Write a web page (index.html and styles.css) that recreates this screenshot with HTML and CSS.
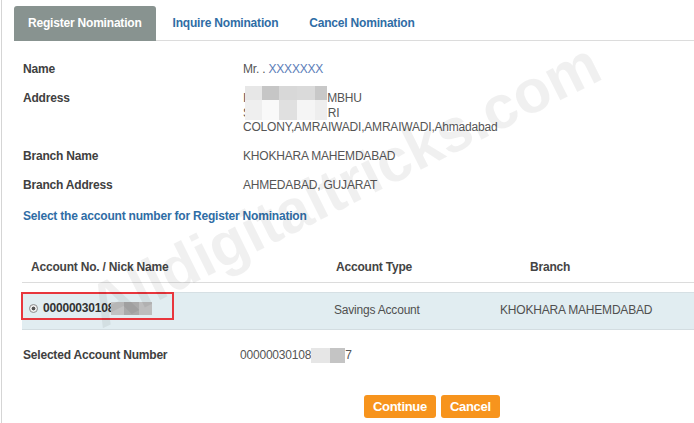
FILE: index.html
```html
<!DOCTYPE html>
<html lang="en">
<head>
<meta charset="utf-8">
<title>Register Nomination</title>
<link rel="stylesheet" href="styles.css">
</head>
<body>
<div class="page">
  <nav class="tabs">
    <a class="tab active" href="#">Register Nomination</a>
    <a class="tab" href="#">Inquire Nomination</a>
    <a class="tab" href="#">Cancel Nomination</a>
  </nav>

  <dl class="details">
    <dt>Name</dt>
    <dd>Mr. . <span class="masked-name">XXXXXXX</span></dd>
    <dt>Address</dt>
    <dd class="addr">
      <div>I<span class="gap gap1"></span>MBHU</div>
      <div>S<span class="gap gap2"></span>RI</div>
      <div>COLONY,AMRAIWADI,AMRAIWADI,Ahmadabad</div>
      <div class="mask"><i></i><i></i><i></i><i></i><i></i><i></i><i></i><i></i><i></i><i></i></div>
    </dd>
    <dt>Branch Name</dt>
    <dd>KHOKHARA MAHEMDABAD</dd>
    <dt>Branch Address</dt>
    <dd>AHMEDABAD, GUJARAT</dd>
  </dl>

  <h2 class="section-title">Select the account number for Register Nomination</h2>

  <div class="accounts">
    <div class="acc-head">
      <div class="h1">Account No. / Nick Name</div>
      <div class="h2">Account Type</div>
      <div class="h3">Branch</div>
    </div>
    <div class="acc-row">
      <div class="c1"><span class="radio"></span><span class="accno">00000030108</span><span class="blur row-blur"><i></i><i></i><i></i></span></div>
      <div class="c2">Savings Account</div>
      <div class="c3">KHOKHARA MAHEMDABAD</div>
      <div class="highlight"></div>
    </div>
  </div>

  <div class="selected">
    <div class="sel-label">Selected Account Number</div>
    <div class="sel-value">00000030108<span class="blur sel-blur"><i></i><i></i></span>7</div>
  </div>

  <div class="actions">
    <button class="btn" type="button">Continue</button>
    <button class="btn" type="button">Cancel</button>
  </div>

  <div class="watermark"><span>Alldigitaltricks.com</span></div>
</div>
</body>
</html>
```

FILE: styles.css
```css
html, body {
  margin: 0;
  padding: 0;
  background: #ffffff;
}

body {
  font-family: "Liberation Sans", Arial, sans-serif;
  font-size: 12px;
  letter-spacing: -0.2px;
  color: #555555;
}

.page {
  position: relative;
  margin-left: 1px;
  border-left: 1px solid #d5d5d5;
  padding: 6px 0 0 12px;
  height: 423px;
  box-sizing: border-box;
  overflow: hidden;
}

/* Tabs */
.tabs {
  display: flex;
  gap: 3px;
  height: 34px;
  border-bottom: 1px solid #dcdcdc;
}

.tab {
  display: block;
  padding: 0 14px;
  line-height: 34px;
  height: 35px;
  margin-bottom: -1px;
  font-weight: bold;
  color: #2f6da5;
  text-decoration: none;
}

.tab.active {
  background: #889390;
  color: #ffffff;
  border-radius: 3px 3px 0 0;
}

/* Details */
.details {
  display: grid;
  grid-template-columns: 220px 1fr;
  row-gap: 14px;
  margin: 0;
  padding: 21px 0 0 9px;
  line-height: 15px;
}

.details dt {
  font-weight: bold;
  color: #404040;
}

.details dd {
  margin: 0;
  color: #555555;
}

.masked-name {
  color: #5b7db8;
}

.addr {
  position: relative;
  line-height: 14.5px;
}

.gap {
  display: inline-block;
}

.gap1 { width: 81px; }
.gap2 { width: 77px; }

.mask {
  position: absolute;
  left: 2px;
  top: -5px;
  display: grid;
  grid-template-columns: 17px 17px 18px 18px 12px;
  grid-template-rows: 14px 20px;
}

.mask i:nth-child(1) { background: #e7e7e7; }
.mask i:nth-child(2) { background: #c6c6c6; }
.mask i:nth-child(3) { background: #d8d8d8; }
.mask i:nth-child(4) { background: #dadada; }
.mask i:nth-child(5) { background: #c8c8c8; }
.mask i:nth-child(6) { background: #efefef; }
.mask i:nth-child(7) { background: #f9f9f9; }
.mask i:nth-child(8) { background: #e0e0e0; }
.mask i:nth-child(9) { background: #f5f5f5; }
.mask i:nth-child(10) { background: #eeeeee; }

.section-title {
  margin: 16px 0 0 9px;
  font-size: 12px;
  line-height: 15px;
  font-weight: bold;
  color: #2f6da5;
}

/* Accounts table */
.accounts {
  margin: 28px 0 0 8px;
}

.acc-head,
.acc-row {
  display: grid;
  grid-template-columns: 312px 162px 1fr;
}

.acc-head {
  padding: 8px 0 7px;
  line-height: 15px;
  border-bottom: 1px solid #dcdcdc;
  font-weight: bold;
  color: #444444;
}

.h1 { padding-left: 9px; }
.h2 { padding-left: 2px; }
.h3 { padding-left: 34px; }

.acc-row {
  position: relative;
  margin-top: 9px;
  height: 36px;
  align-items: center;
  background: #e1edf1;
  border-top: 1px solid #d6e0e4;
  border-bottom: 1px solid #d3dde1;
  line-height: 15px;
  color: #505050;
}

.c1 {
  display: flex;
  align-items: center;
  padding: 0 0 4px 7px;
}

.c3 { padding-left: 4px; }

.radio {
  width: 9px;
  height: 9px;
  margin-right: 5px;
  border-radius: 50%;
  border: 1px solid #8e8e8e;
  box-sizing: border-box;
  background: radial-gradient(circle, #555555 0 1.6px, #eeeeee 2.2px);
}

.accno {
  font-weight: bold;
  color: #333333;
}

.blur {
  display: inline-flex;
}

.row-blur {
  margin-left: -3px;
  height: 13px;
}

.row-blur i:nth-child(1) { width: 13px; background: #c2c2c2; }
.row-blur i:nth-child(2) { width: 15px; background: #aaaaaa; }
.row-blur i:nth-child(3) { width: 13px; background: #bdbdbd; }

.highlight {
  position: absolute;
  left: -1px;
  top: -1px;
  width: 153px;
  height: 28px;
  border: 2px solid #e8363d;
  box-sizing: border-box;
}

/* Selected */
.selected {
  display: grid;
  grid-template-columns: 217px 1fr;
  margin: 18px 0 0 9px;
  line-height: 15px;
}

.sel-label {
  font-weight: bold;
  color: #404040;
}

.sel-value {
  display: flex;
  color: #555555;
}

.sel-blur {
  height: 15px;
}

.sel-blur i:nth-child(1) { width: 19px; background: #e6e6e6; }
.sel-blur i:nth-child(2) { width: 15px; background: #c4c4c4; }

/* Actions */
.actions {
  display: flex;
  gap: 5px;
  margin: 32px 0 0 350px;
}

.btn {
  height: 23px;
  padding: 0 9px;
  border: 0;
  border-radius: 3px;
  background: #f7941d;
  color: #ffffff;
  font-family: "Liberation Sans", Arial, sans-serif;
  font-size: 13px;
  font-weight: bold;
  letter-spacing: -0.3px;
  cursor: pointer;
}

/* Watermark overlay */
.watermark {
  position: absolute;
  left: 100px;
  top: 330px;
  transform-origin: 0 0;
  transform: rotate(-26.5deg);
  pointer-events: none;
  z-index: 5;
}

.watermark span {
  display: block;
  margin-top: -52px;
  font-size: 61px;
  line-height: 61px;
  font-weight: bold;
  letter-spacing: 0;
  white-space: nowrap;
  color: rgba(0, 0, 0, 0.058);
}
```
